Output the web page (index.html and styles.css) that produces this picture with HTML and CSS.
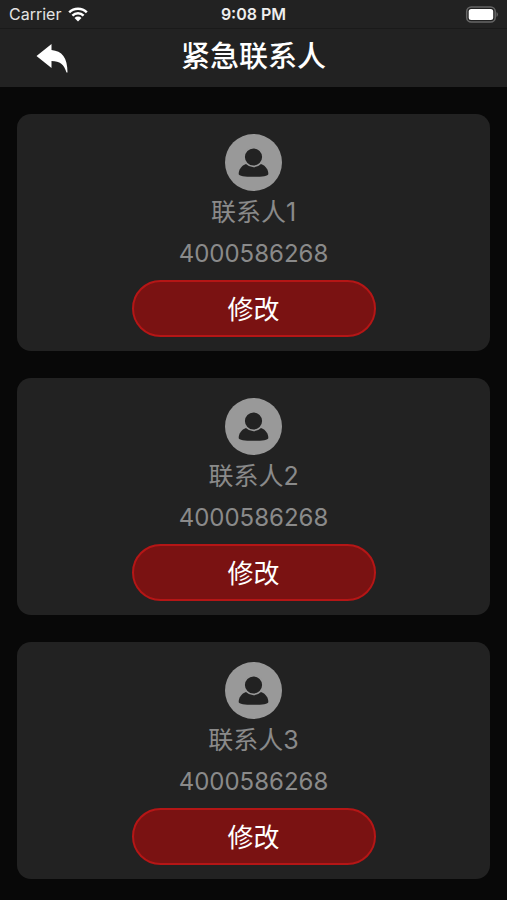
FILE: index.html
```html
<!DOCTYPE html>
<html lang="zh-CN">
<head>
<meta charset="utf-8">
<meta name="viewport" content="width=device-width, initial-scale=1">
<title>紧急联系人</title>
<link rel="stylesheet" href="styles.css">
</head>
<body>
<svg class="defs" aria-hidden="true">
  <symbol id="person" viewBox="0 0 57 57">
    <circle cx="28.500" cy="28.500" r="28.500" fill="#999"/>
    <path d="M21 30C16.500 31.500 13.700 35.500 13.700 40c0 2.200 6 2.800 14.800 2.800s14.800-.6 14.800-2.800c0-4.500-2.800-8.500-7.300-10z" fill="#222"/>
    <circle cx="28.500" cy="23" r="9.400" fill="#222" stroke="#999" stroke-width="1.600"/>
  </symbol>
</svg>
<div class="status">
  <div class="carrier">
    <span>Carrier</span>
    <svg class="wifi" viewBox="0 0 20 15" aria-hidden="true">
      <path d="M1.200 5.300a12.500 12.500 0 0 1 17.600 0M4.400 8.600a8 8 0 0 1 11.200 0" fill="none" stroke="#fff" stroke-width="2.500"/>
      <path d="M6.500 11a5 5 0 0 1 7 0L10 14.500z" fill="#fff"/>
    </svg>
  </div>
  <time class="time">9:08 PM</time>
  <svg class="battery" viewBox="0 0 33 17" aria-hidden="true">
    <rect x="1.700" y="1" width="28.500" height="15" rx="4.500" fill="none" stroke="#666" stroke-width="1.500"/>
    <rect x="3.700" y="3" width="24.500" height="11" rx="2.500" fill="#fff"/>
    <path d="M31.500 6q1.400.8 1.400 2.500T31.500 11z" fill="#666"/>
  </svg>
</div>
<header class="header">
  <a class="back" href="#" aria-label="返回">
    <svg viewBox="0 0 32 29" aria-hidden="true">
      <path d="M.5 12 15.500 0v6C26 7 31.500 13.500 31.500 28.500h-1C28 20.500 24 17 15.500 17v7z" fill="#fff"/>
    </svg>
  </a>
  <h1>紧急联系人</h1>
</header>
<main class="contacts">
  <section class="card">
    <svg class="avatar" aria-hidden="true"><use href="#person"/></svg>
    <h2>联系人1</h2>
    <p>4000586268</p>
    <button type="button">修改</button>
  </section>
  <section class="card">
    <svg class="avatar" aria-hidden="true"><use href="#person"/></svg>
    <h2>联系人2</h2>
    <p>4000586268</p>
    <button type="button">修改</button>
  </section>
  <section class="card">
    <svg class="avatar" aria-hidden="true"><use href="#person"/></svg>
    <h2>联系人3</h2>
    <p>4000586268</p>
    <button type="button">修改</button>
  </section>
</main>
</body>
</html>
```

FILE: styles.css
```css
* {
  box-sizing: border-box;
}

body {
  margin: 0;
  background: #080808;
  color: #fff;
  font-family: Inter, "Noto Sans CJK SC", sans-serif;
}

.defs {
  display: none;
}

.status {
  display: grid;
  grid-template-columns: 1fr auto 1fr;
  align-items: center;
  height: 29px;
  padding: 0 9px;
  background: #222;
  border-bottom: 1px solid #1a1a1a;
  font-size: 16px;
  line-height: 28px;
}

.carrier {
  display: flex;
  align-items: center;
  gap: 7px;
  color: #e4e4e4;
}

.wifi {
  width: 20px;
  height: 15px;
}

.time {
  font-weight: 600;
  color: #eee;
}

.battery {
  justify-self: end;
  width: 33px;
  height: 17px;
}

.header {
  display: grid;
  grid-template-columns: 1fr auto 1fr;
  align-items: center;
  height: 58px;
  padding: 0 36px;
  background: #222;
}

.back svg {
  display: block;
  width: 32px;
  height: 29px;
}

h1 {
  margin: 0;
  padding-bottom: 2px;
  font-size: 29px;
  font-weight: 500;
  line-height: 54px;
}

.contacts {
  display: flex;
  flex-direction: column;
  gap: 27px;
  padding: 27px 17px 22px;
}

.card {
  display: flex;
  flex-direction: column;
  align-items: center;
  padding: 20px 16px 14px;
  border-radius: 14px;
  background: #222;
  color: #8a8a8a;
}

.avatar {
  width: 57px;
  height: 57px;
}

.card h2,
.card p {
  margin: 0;
  font-weight: 400;
  line-height: 42px;
}

.card h2 {
  font-size: 25px;
}

.card p {
  font-size: 24px;
}

.card button {
  width: 244px;
  max-width: 100%;
  height: 57px;
  margin-top: 5px;
  padding: 0 0 3px;
  border: 2px solid #b51616;
  border-radius: 29px;
  background: #7a1212;
  color: #fff;
  font-family: inherit;
  font-size: 26px;
}
```
